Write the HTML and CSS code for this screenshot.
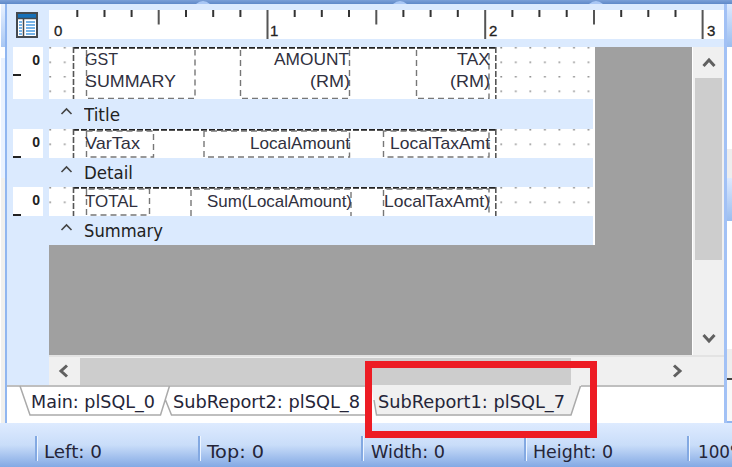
FILE: index.html
```
<!DOCTYPE html>
<html lang="en">
<head>
<meta charset="utf-8">
<title>Report designer</title>
<link rel="stylesheet" href="styles.css">
</head>
<body>
<div class="app">
  <div class="top-edge"><svg width="732" height="4"><path d="M196 4Q203-2 210 4M393 4Q400-2 407 4M589 4Q596-2 603 4" fill="#a9c7f5"/></svg></div>
  <div class="main">
    <div class="left-edge"></div>
    <div class="designer">
      <div class="ruler-row">
        <div class="corner">
          <svg width="22" height="26" viewBox="0 0 22 26"><rect x="1" y="1" width="20" height="24" fill="#fff" stroke="#444a50" stroke-width="2"/><path d="M2 2h18v4H2z" fill="#1670b8"/><path d="M1 6.500h20M7.500 7v18" stroke="#444a50" stroke-width="1.500"/><path d="M3 10h3M3 13h3M3 16h3M3 19h3M3 22h3M10 10h9M10 13h9M10 16h9M10 19h9M10 22h9" stroke="#4a9be0" stroke-width="1.500"/></svg>
        </div>
        <svg class="ruler" width="675" height="29" viewBox="49 10 675 29">
          <path class="tick" d="M77.300 10v7M104.500 10v7M131.600 10v7M186 10v7M213.200 10v7M240.400 10v7M294.700 10v7M321.800 10v7M349 10v7M403.400 10v7M430.600 10v7M457.800 10v7M512.400 10v7M539.400 10v7M566.700 10v7M621.200 10v7M648.300 10v7M675.500 10v7"/>
          <path class="tick long" d="M158.700 10v14.500M376.300 10v14.500M594 10v14.500M267.500 10v29M485.200 10v29M702.600 10v29"/>
          <text x="54" y="35.500">0</text><text x="270" y="35.500">1</text><text x="489" y="35.500">2</text><text x="707" y="35.500">3</text>
        </svg>
      </div>
      <div class="workspace">
        <div class="view">
          <div class="bands">
            <div class="band">
              <div class="vruler tall"><b>0</b><i></i></div>
              <svg width="546" height="52" viewBox="49 47 546 52">
                <defs><pattern id="dots" x="49" y="47" width="14.550" height="14.500" patternUnits="userSpaceOnUse"><rect x=".3" y="0" width="1.800" height="1.500" fill="#909090"/></pattern></defs>
                <rect class="paper" x="49" y="47" width="546" height="52"/><rect x="49" y="47" width="545" height="52" fill="url(#dots)"/>
                <rect class="paper" x="74" y="47" width="423" height="52"/>
                <path class="region-top" d="M73 47.700H497"/><path class="region" d="M73.500 47v52M495.800 47v52"/>
                <path class="field" d="M86.500 50v48.500H195V50M240.500 50v48.500H349.500V50M416.500 50v48.500H489V50"/>
                <text x="85" y="65" textLength="33" lengthAdjust="spacingAndGlyphs">GST</text><text x="85" y="86.500" textLength="91" lengthAdjust="spacingAndGlyphs">SUMMARY</text>
                <text x="274" y="65" textLength="75" lengthAdjust="spacingAndGlyphs">AMOUNT</text><text x="310" y="86.500" textLength="40" lengthAdjust="spacingAndGlyphs">(RM)</text>
                <text x="457" y="65" textLength="33" lengthAdjust="spacingAndGlyphs">TAX</text><text x="450" y="86.500" textLength="40" lengthAdjust="spacingAndGlyphs">(RM)</text>
              </svg>
            </div>
            <div class="band-bar"><svg width="14" height="8"><path d="M1.500 7l5-5 5 5"/></svg><svg width="100" height="28"><text x="0" y="20" textLength="36" lengthAdjust="spacingAndGlyphs">Title</text></svg></div>
            <div class="band">
              <div class="vruler"><b>0</b><i></i></div>
              <svg width="546" height="29" viewBox="49 129 546 29">
                <g transform="translate(0 82)"><rect class="paper" x="49" y="47" width="546" height="29"/><rect x="49" y="47" width="545" height="29" fill="url(#dots)"/></g>
                <rect class="paper" x="74" y="129" width="423" height="29"/>
                <path class="region-top" d="M73 129.700H497"/><path class="region" d="M73.500 129v29M495.800 129v29"/>
                <path class="field" d="M86.500 131v26H153.500V131zM204 131v26H349.500V131zM383.500 131v26H489V131z"/>
                <text x="85" y="148.500" textLength="55" lengthAdjust="spacingAndGlyphs">VarTax</text><text x="250" y="148.500" textLength="100" lengthAdjust="spacingAndGlyphs">LocalAmount</text><text x="390" y="148.500" textLength="100" lengthAdjust="spacingAndGlyphs">LocalTaxAmt</text>
              </svg>
            </div>
            <div class="band-bar"><svg width="14" height="8"><path d="M1.500 7l5-5 5 5"/></svg><svg width="100" height="28"><text x="0" y="20" textLength="49" lengthAdjust="spacingAndGlyphs">Detail</text></svg></div>
            <div class="band">
              <div class="vruler"><b>0</b><i></i></div>
              <svg width="546" height="29" viewBox="49 187 546 29">
                <g transform="translate(0 140)"><rect class="paper" x="49" y="47" width="546" height="29"/><rect x="49" y="47" width="545" height="29" fill="url(#dots)"/></g>
                <rect class="paper" x="74" y="187" width="423" height="29"/>
                <path class="region-top" d="M73 187.700H497"/><path class="region" d="M73.500 187v29M495.800 187v29"/>
                <path class="field" d="M86.500 189v26H149.500V189zM191 216V189H351v27M383.500 216V189H489v27"/>
                <text x="85" y="207" textLength="53" lengthAdjust="spacingAndGlyphs">TOTAL</text><text x="207" y="207" textLength="145" lengthAdjust="spacingAndGlyphs">Sum(LocalAmount)</text><text x="384" y="207" textLength="106" lengthAdjust="spacingAndGlyphs">LocalTaxAmt)</text>
              </svg>
            </div>
            <div class="band-bar"><svg width="14" height="8"><path d="M1.500 7l5-5 5 5"/></svg><svg width="100" height="28"><text x="0" y="20" textLength="79" lengthAdjust="spacingAndGlyphs">Summary</text></svg></div>
          </div>
          <div class="vscroll"><svg width="14" height="12"><path d="M1.500 10L7 4l5.500 6"/></svg><div class="vthumb"></div><svg class="down" width="14" height="12"><path d="M1.500 2L7 8l5.500-6"/></svg></div>
        </div>
        <div class="hscroll"><svg width="12" height="14"><path d="M10 1.500L4 7l6 5.500"/></svg><div class="hthumb"></div><svg class="right" width="12" height="14"><path d="M2 1.500L8 7l-6 5.500"/></svg></div>
      </div>
      <svg class="tabs" width="717" height="38" viewBox="7 385 717 38">
        <path d="M371 385L376.500 415.500H571L581 385z" fill="#f0f0f0"/>
        <path d="M7 386H372M581 386H724" class="tab-line"/>
        <path d="M20 386L30 415H160.500L169.500 386M165.500 400L171.500 415H365M374 400L376.500 415H571L580.500 386" class="tab-line"/>
        <text x="31" y="407.500" textLength="124" lengthAdjust="spacingAndGlyphs">Main: plSQL_0</text>
        <text x="173" y="407.500" textLength="187" lengthAdjust="spacingAndGlyphs">SubReport2: plSQL_8</text>
        <text x="378" y="407.500" textLength="187" lengthAdjust="spacingAndGlyphs">SubReport1: plSQL_7</text>
      </svg>
    </div>
    <div class="right-edge"><div class="glow"></div><div class="blank"></div><div class="pale"></div><div class="glow low"></div><div class="blank rest"></div><div class="foot"></div></div>
  </div>
  <div class="status">
    <div class="cell first"></div>
    <div class="cell"><svg width="130" height="28"><text x="7" y="22" textLength="58" lengthAdjust="spacingAndGlyphs">Left: 0</text></svg></div>
    <div class="cell"><svg width="130" height="28"><text x="7" y="22" textLength="57" lengthAdjust="spacingAndGlyphs">Top: 0</text></svg></div>
    <div class="cell"><svg width="130" height="28"><text x="8" y="22" textLength="74" lengthAdjust="spacingAndGlyphs">Width: 0</text></svg></div>
    <div class="cell"><svg width="130" height="28"><text x="7" y="22" textLength="80" lengthAdjust="spacingAndGlyphs">Height: 0</text></svg></div>
    <div class="cell"><svg width="60" height="28"><text x="9" y="22" textLength="48" lengthAdjust="spacingAndGlyphs">100%</text></svg></div>
  </div>
  <div class="highlight"></div>
</div>
</body>
</html>
```
FILE: styles.css
```
* { box-sizing: border-box; }
body { margin: 0; overflow: hidden; font: 18px "DejaVu Sans Condensed", "DejaVu Sans", sans-serif; color: #222; }
svg { display: block; flex: none; }
.app { width: 732px; height: 467px; position: relative; display: flex; flex-direction: column; overflow: hidden; }
.top-edge { height: 4px; background: linear-gradient(#7ba0d8, #5f89c8); }
.main { height: 419px; display: flex; background: #dbeafe; }
.left-edge { width: 7px; border-left: 1px solid #fff; border-right: 2px solid #90b6f0; background: linear-gradient(#e9f2ff, #a9c8f4 43px, #fff 43px, #fff 54px, #e9f2ff 54px, #e9f2ff 174px, #f0f0ee 174px); }
.designer { width: 717px; display: flex; flex-direction: column; }
.ruler-row { height: 43px; padding-top: 6px; display: flex; }
.corner { width: 42px; padding: 2px 0 0 9px; }
.ruler { background: #fff; }
.ruler text { font: 15px "Liberation Sans", sans-serif; fill: #222; stroke: #222; stroke-width: .3; }
.tick { stroke: #333; stroke-width: 2; }
.long { stroke: #555; }
.workspace { height: 338px; display: flex; flex-direction: column; }
.view { height: 308px; display: flex; background: linear-gradient(90deg, #dbeafe 42px, #a0a0a0 42px); }
.bands { width: 685px; flex: none; }
.band { display: flex; background: linear-gradient(90deg, #dbeafe 42px, transparent 42px); }
.paper { fill: #fff; }
.vruler { width: 30px; height: 29px; margin: 0 6px; background: #fff; position: relative; }
.tall { height: 52px; }
.vruler b { display: block; font: bold 14px/26px "Liberation Sans", sans-serif; text-align: right; padding-right: 3px; }
.vruler i { position: absolute; left: 0; bottom: 0; width: 8px; height: 2px; background: #222; }
.tall i { bottom: 23px; }
.band text { font: 17px "Liberation Sans", sans-serif; fill: #30303e; }
.region-top { stroke: #222; stroke-width: 2; stroke-dasharray: 6 2; }
.region { fill: none; stroke: #555; stroke-width: 1.6; stroke-dasharray: 6 2; }
.field { fill: none; stroke: #777; stroke-width: 1.4; stroke-dasharray: 6 4; }
.band-bar { width: 588px; height: 29px; background: #dbeafe; border-right: 2px solid #fff; display: flex; align-items: center; padding: 1px 0 0 53px; gap: 10px; }
.band:first-child + .band-bar { height: 30px; }
.band-bar svg:first-child { margin-bottom: 8px; }
.band-bar path { fill: none; stroke: #444; stroke-width: 1.6; }
.band-bar text { fill: #222; }
.vscroll { width: 32px; background: #f0f0f0; border-left: 1px solid #fff; display: flex; flex-direction: column; align-items: center; padding: 9px 1px 10px; }
.vscroll path, .hscroll path { fill: none; stroke: #606060; stroke-width: 3; }
.vthumb { width: 27px; height: 182px; margin-top: 10px; background: #cdcdcd; }
.down { margin-top: auto; }
.hscroll { height: 30px; margin-left: 42px; background: #f0f0f0; border-top: 2px solid #e3e3e3; display: flex; align-items: center; padding-left: 8px; }
.hthumb { width: 491px; height: 27px; margin-left: 11px; background: #cdcdcd; }
.right { margin-left: 101px; }
.tabs { background: #fff; }
.tab-line { fill: none; stroke: #aaa; stroke-width: 1.5; }
.tabs text { fill: #252538; }
.right-edge { width: 8px; border-left: 3px solid #a2c1f5; display: flex; flex-direction: column; }
.glow { height: 43px; background: linear-gradient(#dceaff, #9bbdef); }
.blank { height: 102px; background: #fff; }
.pale { height: 29px; background: #eee; }
.low { height: 43px; }
.rest { height: 128px; }
.foot { flex: 1; background: linear-gradient(#eee 29px, #444 29px, #444 31px, #f8f8f8 31px); border-bottom: 2px solid #90b6f0; }
.status { height: 44px; padding-top: 13px; background: linear-gradient(#deebff, #c9ddf9 50%, #83a9e4); display: flex; }
.cell { width: 163px; flex: none; height: 25px; border-left: 2px solid #83a9e2; box-shadow: inset 1px 0 #edf5ff; }
.first { width: 35px; border: 0; box-shadow: none; }
.status text { fill: #252538; }
.highlight { position: absolute; left: 365px; top: 361px; width: 232px; height: 77px; border: 7px solid #ed1c24; }
```
